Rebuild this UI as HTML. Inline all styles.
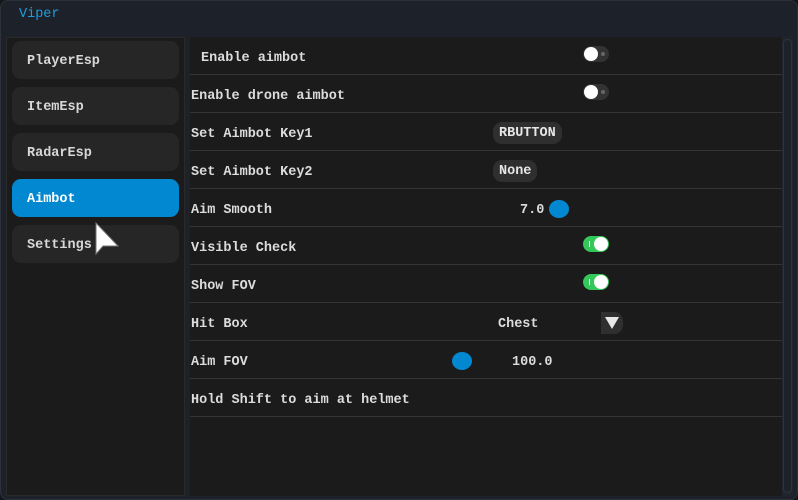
<!DOCTYPE html>
<html><head><style>
*{margin:0;padding:0;box-sizing:border-box}
body{width:798px;height:500px;background:#141619;overflow:hidden;font-family:"Liberation Mono",monospace;font-size:13.5px;color:#e6e6e6;position:relative}
.win{position:absolute;left:0;top:0;width:798px;height:500px;background:#1d2129;border:1px solid #2c313a;border-radius:8px}
.title{position:absolute;left:19px;top:7px;color:#1e9ee0;font-size:13.5px}
.side{position:absolute;left:6px;top:37px;width:179px;height:459px;background:#1b1b1b;border:1px solid #2a2a2a}
.btn{position:absolute;left:5px;width:167px;height:38px;background:#262626;border-radius:9px;padding-left:15px;padding-top:2px;line-height:38px;font-weight:bold;color:#d8d8d8}
.btn.act{background:#0288d1;color:#fff}
.main{position:absolute;left:190px;top:37px;width:592px;height:459px;background:#1b1b1b}
.row{position:absolute;left:0;width:592px;height:38px;border-bottom:1px solid #353535;line-height:38px;padding-top:3px;padding-left:1px;font-weight:bold;color:#dcdcdc}
.sb{position:absolute;left:782px;top:37px;width:11px;height:459px;background:#20252c}
.sb div{position:absolute;left:1px;top:2px;width:9px;height:454px;background:#1c2229;border:1px solid #2c343d;border-radius:4px}
.tog{position:absolute;width:26px;height:16px;border-radius:8px}
.off{background:#333}
.off:before{content:"";position:absolute;left:1px;top:1px;width:14px;height:14px;border-radius:50%;background:#fff}
.off:after{content:"";position:absolute;left:18px;top:6px;width:4px;height:4px;border-radius:50%;background:#666}
.on{background:#34c759}
.on:before{content:"";position:absolute;right:1px;top:1px;width:14px;height:14px;border-radius:50%;background:#fff}
.on:after{content:"";position:absolute;left:6px;top:5px;width:1px;height:6px;background:#fff}
.pill{position:absolute;height:22px;line-height:22px;padding-top:1px;background:#2f2f2f;border-radius:9px;padding-left:6px;padding-right:6px;font-weight:bold}
.knob{position:absolute;width:20px;height:18px;border-radius:50%;background:#0288d1}
.v{position:absolute;font-weight:bold;color:#dcdcdc}
</style></head><body>
<div class="win"></div>
<div class="title">Viper</div>
<div class="side">
<div class="btn" style="top:3px">PlayerEsp</div>
<div class="btn" style="top:49px">ItemEsp</div>
<div class="btn" style="top:95px">RadarEsp</div>
<div class="btn act" style="top:141px">Aimbot</div>
<div class="btn" style="top:187px">Settings</div>
</div>
<svg style="position:absolute;left:94px;top:221px" width="26" height="36"><path d="M2 2 L2 33 L9 25 L24 25 Z" fill="#fff" stroke="#777" stroke-width="1"/></svg>
<div class="main">
<div class="row" style="top:0;padding-left:11px">Enable aimbot</div>
<div class="row" style="top:38px">Enable drone aimbot</div>
<div class="row" style="top:76px">Set Aimbot Key1</div>
<div class="row" style="top:114px">Set Aimbot Key2</div>
<div class="row" style="top:152px">Aim Smooth</div>
<div class="row" style="top:190px">Visible Check</div>
<div class="row" style="top:228px">Show FOV</div>
<div class="row" style="top:266px">Hit Box</div>
<div class="row" style="top:304px">Aim FOV</div>
<div class="row" style="top:342px">Hold Shift to aim at helmet</div>
<div class="tog off" style="left:393px;top:9px"></div>
<div class="tog off" style="left:393px;top:47px"></div>
<div class="pill" style="left:303px;top:85px">RBUTTON</div>
<div class="pill" style="left:303px;top:123px">None</div>
<div class="v" style="left:330px;top:166px">7.0</div>
<div class="knob" style="left:359px;top:163px"></div>
<div class="tog on" style="left:393px;top:199px"></div>
<div class="tog on" style="left:393px;top:237px"></div>
<div class="v" style="left:308px;top:280px">Chest</div>
<div style="position:absolute;left:411px;top:275px;width:22px;height:22px;background:#2f2f2f;border-radius:0 9px 9px 0"></div>
<svg style="position:absolute;left:414px;top:279px" width="16" height="14"><path d="M1 1 L15 1 L8 13 Z" fill="#e8e8e8"/></svg>
<div class="knob" style="left:262px;top:315px"></div>
<div class="v" style="left:322px;top:318px">100.0</div>
</div>
<div class="sb"><div></div></div>
</body></html>
